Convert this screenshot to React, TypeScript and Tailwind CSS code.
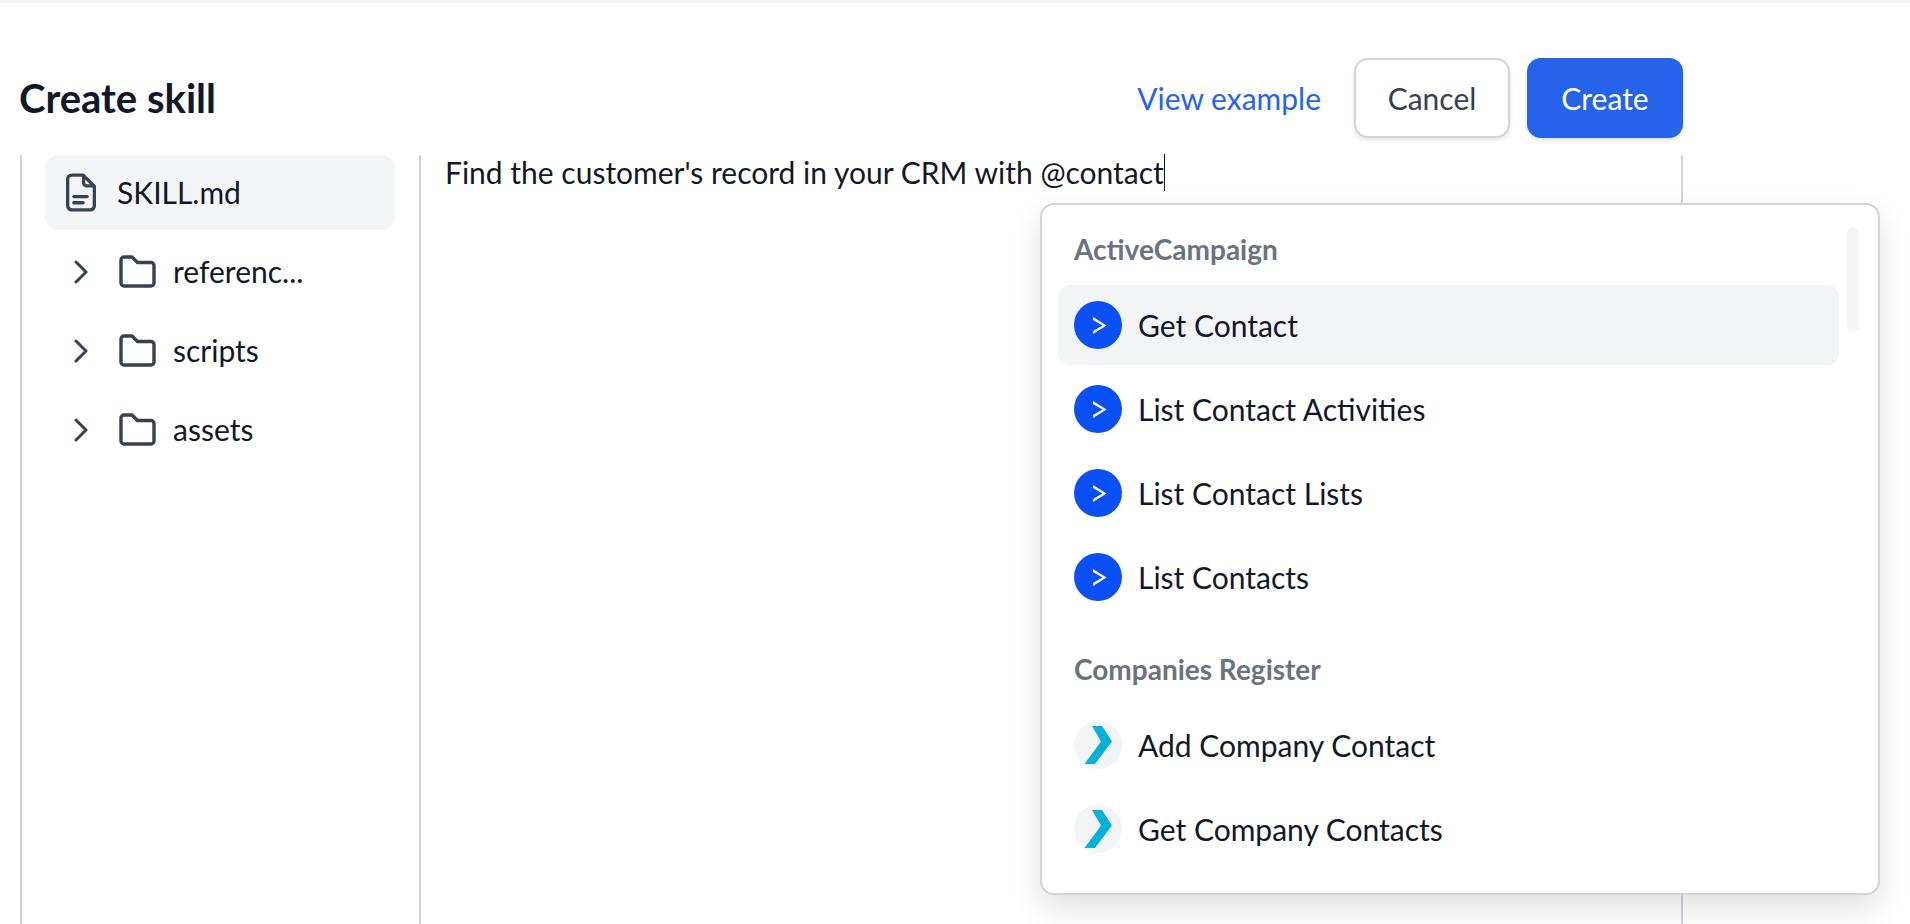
const font = "font-['Lato','Liberation_Sans',sans-serif]"

function DocIcon() {
  return (
    <svg width="32" height="39" viewBox="0 0 30 38" fill="none" stroke="#374151" strokeWidth="3.2" strokeLinecap="round" strokeLinejoin="round">
      <path d="M2 6a4 4 0 0 1 4-4h11l11 11v19a4 4 0 0 1-4 4H6a4 4 0 0 1-4-4z" />
      <path d="M17.5 2.5v7a3 3 0 0 0 3 3h7" />
      <path d="M8 23h13" />
      <path d="M8 29h9" />
    </svg>
  )
}

function FolderIcon() {
  return (
    <svg width="37" height="33" viewBox="0 0 37 33" fill="none" stroke="#374151" strokeWidth="3.4" strokeLinecap="round" strokeLinejoin="round">
      <path d="M2 5a3 3 0 0 1 3-3h8l5.5 5.5H32a3 3 0 0 1 3 3V28a3 3 0 0 1-3 3H5a3 3 0 0 1-3-3z" />
    </svg>
  )
}

function Chevron() {
  return (
    <svg width="14" height="24" viewBox="0 0 14 24" fill="none" stroke="#374151" strokeWidth="3" strokeLinecap="round" strokeLinejoin="round">
      <path d="M2 2l10 10L2 22" />
    </svg>
  )
}

function ActiveCampaignIcon() {
  return (
    <svg width="48" height="48" viewBox="0 0 48 48" className="shrink-0">
      <circle cx="24" cy="24" r="24" fill="#0b50f5" />
      <path d="M19 16l13.5 8.5L19 33v-3l9.5-5.5L19 19z" fill="#fff" />
    </svg>
  )
}

function CompaniesIcon() {
  return (
    <svg width="48" height="48" viewBox="0 0 48 48" className="shrink-0">
      <circle cx="24" cy="24" r="24" fill="#f3f4f6" />
      <path d="M18 5h10l10 15.5L21 43H10.5l16.5-22.5z" fill="#06b0d9" />
    </svg>
  )
}

function TreeFolder({ name }: { name: string }) {
  return (
    <div className="flex h-[79px] items-center pl-[29px]">
      <Chevron />
      <div className="ml-[31px] mr-[17px]">
        <FolderIcon />
      </div>
      <span className="text-[30px] text-[#111827]">{name}</span>
    </div>
  )
}

function MenuItem({ label, active, icon }: { label: string; active?: boolean; icon: React.ReactNode }) {
  return (
    <div className={`flex h-[80px] items-center gap-4 rounded-xl pl-4 text-[30px] text-[#111827] ${active ? "bg-[#f3f4f6]" : ""}`}>
      {icon}
      <span>{label}</span>
    </div>
  )
}

export default function App() {
  return (
    <div className={`relative flex h-[924px] w-[1910px] flex-col overflow-hidden bg-white ${font}`}>
      <div className="h-[3px] shrink-0 bg-[#f3f4f6]" />
      <div className="ml-5 flex w-[1664px] shrink-0 items-center justify-between pt-[55px] pb-[17px]">
        <h1 className="-ml-px text-[40px] leading-[80px] font-bold text-[#111827]">Create skill</h1>
        <div className="flex items-center">
          <a className="mr-[33px] text-[30px] text-[#2563eb]">View example</a>
          <button className="mr-[18px] h-[80px] w-[156px] rounded-[14px] border-2 border-[#d1d5db] bg-white text-[30px] text-[#374151] shadow-[0_2px_4px_rgba(0,0,0,0.12)]">Cancel</button>
          <button className="h-[80px] w-[156px] -translate-x-px rounded-[14px] bg-[#2563eb] text-[30px] text-white shadow-[0_2px_4px_rgba(0,0,0,0.12)]">Create</button>
        </div>
      </div>

      <div className="ml-5 flex min-h-0 w-[1663px] flex-1 border-x-2 border-[#d1d5db]">
        <div className="w-[399px] shrink-0 border-r-2 border-[#d1d5db] pl-[23px]">
          <div className="mb-[2px] flex h-[75px] w-[350px] items-center gap-[20px] rounded-[14px] bg-[#f3f4f6] pl-[20px] text-[30px] text-[#111827]">
            <DocIcon />
            <span>SKILL.md</span>
          </div>
          <TreeFolder name="referenc..." />
          <TreeFolder name="scripts" />
          <TreeFolder name="assets" />
        </div>
        <div className="flex-1 pl-[24px]">
          <p className="flex h-[34px] items-center text-[30px] text-[#111827]">
            Find the customer's record in your CRM with @contact
            <span className="h-[37px] w-[1.5px] bg-[#111827]" />
          </p>
        </div>
      </div>

      <div className="absolute top-[203px] left-[1040px] h-[692px] w-[840px] rounded-[14px] border-2 border-[#d1d5db] bg-white shadow-[0_14px_32px_rgba(0,0,0,0.12)]">
        <div className="absolute top-[22px] right-[19px] h-[105px] w-[12px] rounded-full bg-[#f3f4f6]" />
        <div className="w-[797px] pl-[16px]">
          <div className="flex h-[80px] items-center pt-[8px] pl-4 text-[28px] font-bold text-[#6b7280]">ActiveCampaign</div>
          <MenuItem active label="Get Contact" icon={<ActiveCampaignIcon />} />
          <div className="mt-1 flex flex-col gap-1">
            <MenuItem label="List Contact Activities" icon={<ActiveCampaignIcon />} />
            <MenuItem label="List Contact Lists" icon={<ActiveCampaignIcon />} />
            <MenuItem label="List Contacts" icon={<ActiveCampaignIcon />} />
          </div>
          <div className="flex h-[88px] items-center pt-[16px] pl-4 text-[28px] font-bold text-[#6b7280]">Companies Register</div>
          <div className="flex flex-col gap-1">
            <MenuItem label="Add Company Contact" icon={<CompaniesIcon />} />
            <MenuItem label="Get Company Contacts" icon={<CompaniesIcon />} />
          </div>
        </div>
      </div>
    </div>
  )
}
